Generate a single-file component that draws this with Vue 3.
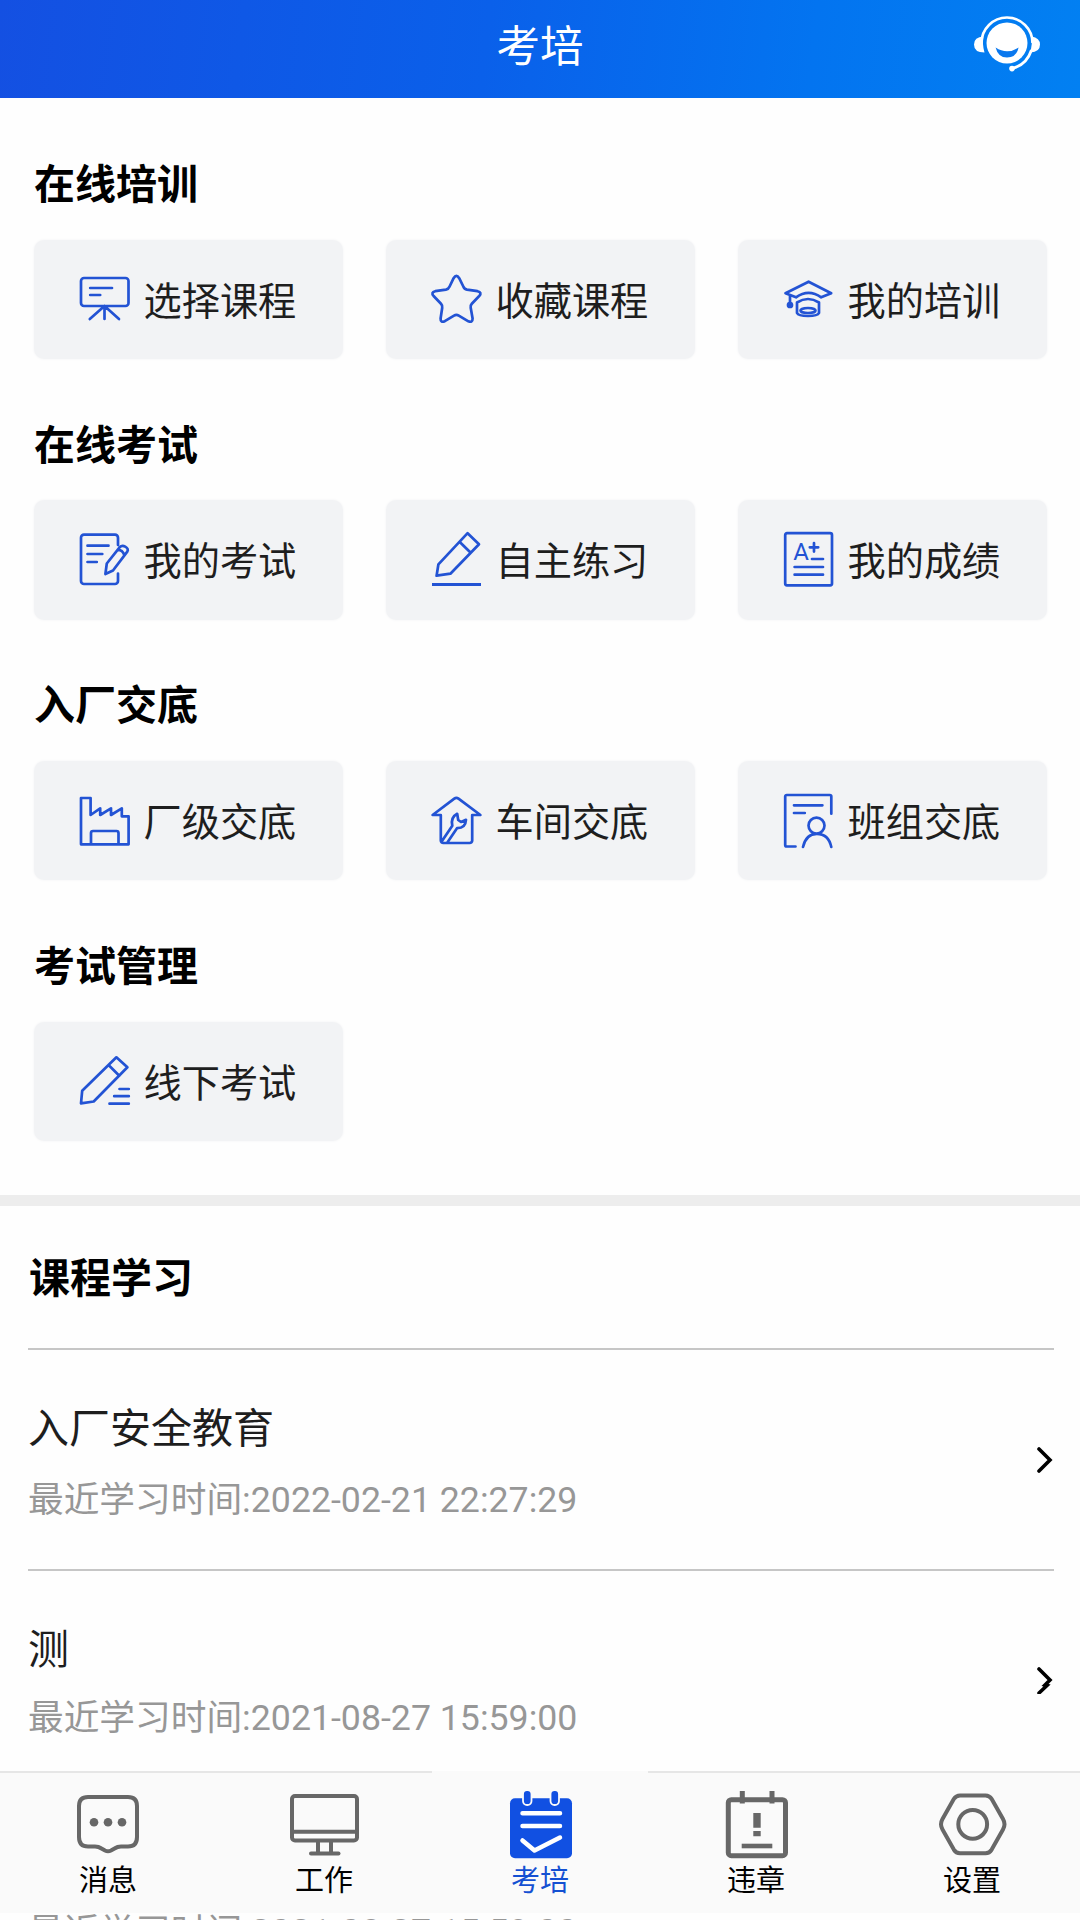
<script setup>
const sections = [
  {
    title: '在线培训',
    items: [
      { label: '选择课程', icon: 'board' },
      { label: '收藏课程', icon: 'star' },
      { label: '我的培训', icon: 'cap' },
    ],
  },
  {
    title: '在线考试',
    items: [
      { label: '我的考试', icon: 'exam' },
      { label: '自主练习', icon: 'edit' },
      { label: '我的成绩', icon: 'score' },
    ],
  },
  {
    title: '入厂交底',
    items: [
      { label: '厂级交底', icon: 'factory' },
      { label: '车间交底', icon: 'workshop' },
      { label: '班组交底', icon: 'team' },
    ],
  },
  {
    title: '考试管理',
    items: [{ label: '线下考试', icon: 'offline' }],
  },
]

const iconPaths = {
  board: 'M4 9H45.5a3 3 0 0 1 3 3V34a3 3 0 0 1-3 3H4a3 3 0 0 1-3-3V12a3 3 0 0 1 3-3ZM10.2 19H32M10.2 26H20.2M24.5 37V50M24.5 37L9.8 50M24.5 37L39 50',
  star: 'M21.6 9.2Q24.4 4.6 27.2 9.2L31.3 17.5Q32.3 20.2 35 20.7L45.5 22.2Q50.4 23.4 47.2 27L39.8 34.8Q38.2 36.5 38.7 38.8L40.6 49.5Q40.6 54 36.4 52.3L26.8 46.6Q24.4 45.2 22 46.6L12.8 52.2Q8.4 54 8.6 49.5L10.2 38.8Q10.6 36.5 9 34.8L1.6 27Q-1.4 23.4 3.2 22.2L13.9 20.7Q16.5 20.2 17.6 17.5Z',
  cap: 'M1.5 24.2L24.6 12.7L47.2 24.2L37.2 28.3Q24.6 19.5 12 28.3ZM13 44V33.5Q24 26.5 35 33.5V44Q33.5 47 24 47Q14.5 47 13 44ZM6 26.5V34',
  exam: 'M38 15V7.7a3 3 0 0 0-3-3H4a3 3 0 0 0-3 3V51a3 3 0 0 0 3 3H35a3 3 0 0 0 3-3V43.5M7.5 15.7H28.5M7.5 24H22.3M7.5 32H16.8M25.4 44L26.8 33.5L39.6 17.3Q42 14.8 45.2 16.6Q49 18.8 47.3 21.6L33 40.5ZM38.2 19.8Q42.5 20 44.2 24.8',
  edit: 'M4.6 45.7L6.4 34.3L35.6 3.2L47 14.3L18.4 43.7ZM28 12.3L38.2 22.3',
  score: 'M3 3.2H46.2a1.8 1.8 0 0 1 1.8 1.8V53.5a1.8 1.8 0 0 1-1.8 1.8H3a1.8 1.8 0 0 1-1.8-1.8V5a1.8 1.8 0 0 1 1.8-1.8ZM25.8 17.3H34.2M30 13V21.6M28 29H39M10.6 37H39M10.6 44.7H39',
  factory: 'M1 53.3V7H10.6V24L20.2 17.3V24L31 17.3V24L41.8 17.3V25.3H48.6V53.3ZM11 53.3V42a2 2 0 0 1 2-2H36.5a2 2 0 0 1 2 2V53.3',
  workshop: 'M22.3 7.6Q24.4 6 26.5 7.6L48.4 24H40.2V49.5a2.5 2.5 0 0 1-2.5 2.5H11.3a2.5 2.5 0 0 1-2.5-2.5V24H.6ZM10 50L20.3 34.8Q18.4 26.5 25.2 22.8L26.2 29L29 31L34 28.8Q33.6 37.3 25 37.2L15.5 51.2',
  team: 'M47.3 22.7V5.5a1.5 1.5 0 0 0-1.5-1.5H2.7a1.5 1.5 0 0 0-1.5 1.5V54a1.5 1.5 0 0 0 1.5 1.5H11.5M10 14.3H38.4M10 22H20.8M24.5 34.6a8 8 0 1 0 16 0a8 8 0 1 0-16 0M19 56Q22 42.8 32.8 42.8Q44.5 42.8 47.3 56',
  offline: 'M1 52.3L2.2 39.7L36.4 6.3L47.4 16.3L13.7 50.5ZM28.8 14.3L39.3 24.7M39.5 38H48.8M34.2 45.2H48.8M29.5 52.7H48.8',
}

const records = [
  { title: '入厂安全教育', time: '2022-02-21 22:27:29', arrow: 'M2 2L13 13L2 24' },
  { title: '测', time: '2021-08-27 15:59:00', arrow: 'M2 2L13 13L8 18L10 18.5L2 26' },
  { title: '测', time: '2021-08-27 15:59:00' },
]

const tabs = [
  { label: '消息', icon: 'message' },
  { label: '工作', icon: 'work' },
  { label: '考培', icon: 'training', active: true },
  { label: '违章', icon: 'violation' },
  { label: '设置', icon: 'settings' },
]
</script>

<template>
  <div class="page">
    <header class="header">
      <h1 class="header-title">考培</h1>
      <svg class="service" viewBox="0 0 74 66" width="74" height="66">
        <path d="M11.5 33A25.5 25.5 0 0 1 62.5 33" fill="none" stroke="#fff" stroke-width="2.6" />
        <path d="M13.5 26.5Q4 27 4 34.5Q4 42.5 14.5 42.5Q12 34 13.5 26.5Z" fill="#fff" />
        <path d="M61.5 26.5Q70 28 70 34.5Q70 42 60.5 42.5Q62.5 34 61.5 26.5Z" fill="#fff" />
        <path d="M61.5 40Q56.5 55 42 58.6" fill="none" stroke="#fff" stroke-width="2.8" />
        <circle cx="42" cy="58.6" r="2.8" fill="#fff" />
        <circle cx="37" cy="33" r="20.5" fill="#fff" />
        <path d="M25.6 37.5Q37 45 48.6 37.5Q46.500 47.5 37 47.5Q28 47.5 25.6 37.5Z" fill="#0a78ee" />
      </svg>
    </header>

    <main class="menu">
      <section v-for="section in sections" :key="section.title" class="section">
        <h2 class="section-title">{{ section.title }}</h2>
        <div class="grid">
          <div v-for="item in section.items" :key="item.label" class="card">
            <svg class="card-icon" viewBox="0 0 50 60" width="50" height="60">
              <path :d="iconPaths[item.icon]" />
              <template v-if="item.icon === 'cap'">
                <ellipse cx="24" cy="41.5" rx="7.5" ry="2.5" />
                <circle class="solid" cx="6" cy="36" r="2" />
              </template>
              <path v-if="item.icon === 'edit'" class="underline" d="M0 54.5H49" />
              <text v-if="item.icon === 'score'" class="grade" x="9.3" y="30">A</text>
            </svg>
            <span class="card-label">{{ item.label }}</span>
          </div>
        </div>
      </section>
    </main>

    <section class="records">
      <h2 class="section-title records-title">课程学习</h2>
      <article v-for="(record, i) in records" :key="i" class="record">
        <div class="record-body">
          <div class="record-title">{{ record.title }}</div>
          <div class="record-time">最近学习时间:{{ record.time }}</div>
        </div>
        <svg v-if="record.arrow" class="arrow" viewBox="0 0 16 27" width="16" height="27"><path :d="record.arrow" /></svg>
      </article>
    </section>

    <nav class="tabbar">
      <div v-for="tab in tabs" :key="tab.label" class="tab" :class="{ active: tab.active }">
        <svg class="tab-icon" viewBox="0 0 72 72" width="72" height="72">
          <template v-if="tab.icon === 'message'">
            <path d="M16 9H56Q65 9 65 18V49Q65 58.5 56 58.5H49Q45.5 58.5 42.5 60.5L39 62.5Q36 64 33 62.5L29.5 60.5Q26.5 58.5 23 58.5H16Q7 58.5 7 49V18Q7 9 16 9Z" />
            <circle class="fill" cx="22" cy="34.3" r="4.3" />
            <circle class="fill" cx="36" cy="34.3" r="4.3" />
            <circle class="fill" cx="50" cy="34.3" r="4.3" />
          </template>
          <template v-else-if="tab.icon === 'work'">
            <rect x="4" y="8" width="65" height="44.5" rx="3" />
            <path d="M4 43.7H69M30 53V65M43 53V65" />
            <path d="M23 65.5H50.5" stroke-linecap="round" />
          </template>
          <template v-else-if="tab.icon === 'training'">
            <rect class="blue" x="6" y="10.3" width="62" height="60" rx="5" />
            <rect class="pin" x="19" y="2" width="8.5" height="15" rx="4" />
            <rect class="pin" x="46.5" y="2" width="8.5" height="15" rx="4" />
            <path class="white" d="M18.5 25.3H56M18.5 38H56M18.5 52.5L30.5 62.5L56 49.5" />
          </template>
          <template v-else-if="tab.icon === 'violation'">
            <rect x="8.3" y="11.7" width="57.2" height="56" rx="3" stroke-width="5" />
            <path d="M22.3 3V15.5M52 3V15.5" stroke-width="5" />
            <path d="M37 25V39.7M37 43V48.3" stroke-width="7.4" />
            <path d="M21.7 58H52.3" stroke-width="4.6" />
          </template>
          <template v-else>
            <path d="M24 7.4H49.5Q53.5 7.4 55.7 11L67 31Q70 36.3 67 41.6L55.7 61.6Q53.5 65.2 49.5 65.2H24Q20 65.2 17.8 61.6L6.5 41.6Q3.5 36.3 6.5 31L17.8 11Q20 7.4 24 7.4Z" />
            <circle cx="36.7" cy="36.3" r="14.4" />
          </template>
        </svg>
        <span class="tab-label">{{ tab.label }}</span>
      </div>
    </nav>
  </div>
</template>

<style>
body {
  margin: 0;
  background: #fefefe;
}
</style>

<style scoped>
.page {
  position: relative;
  width: 1080px;
  height: 1920px;
  overflow: hidden;
  background: #fefefe;
  font-family: Roboto, "Noto Sans CJK SC", sans-serif;
  color: #1e1e1e;
}
.header {
  display: flex;
  align-items: center;
  justify-content: flex-end;
  position: relative;
  height: 98px;
  box-sizing: border-box;
  padding: 0 36px 12px 0;
  background: linear-gradient(97deg, #1450e2 0%, #0a60ea 45%, #0374f0 75%, #0280f2 100%);
}
.header-title {
  position: absolute;
  inset: 0;
  margin: 0;
  text-align: center;
  font-size: 43.5px;
  font-weight: 400;
  line-height: 95px;
  color: #fff;
}
.menu {
  display: flex;
  flex-direction: column;
  gap: 55.7px;
  height: 1041px;
  padding: 56px 33px 0 34px;
}
.section-title {
  margin: 0;
  font-size: 41px;
  font-weight: 700;
  line-height: 63px;
  color: #000;
}
.grid {
  display: grid;
  grid-template-columns: repeat(3, 309px);
  gap: 43px;
  margin-top: 22.5px;
}
.card {
  display: flex;
  align-items: center;
  gap: 14px;
  height: 119.5px;
  box-sizing: border-box;
  padding-left: 45.5px;
  border-radius: 10px;
  background: #f2f3f5;
  box-shadow: 0 0 3px #f2f3f5;
}
.card-icon {
  flex: none;
  overflow: visible;
  fill: none;
  stroke: #2353d4;
  stroke-width: 2.7;
  stroke-linejoin: round;
  stroke-linecap: round;
}
.card-icon .solid {
  fill: #2353d4;
}
.card-icon .underline {
  stroke-width: 3.2;
  stroke-linecap: butt;
}
.card-icon .grade {
  font-family: Roboto, sans-serif;
  font-size: 24px;
  fill: #2353d4;
  stroke: none;
}
.card-label {
  padding-top: 5px;
  font-size: 38.2px;
  line-height: 56px;
  white-space: nowrap;
}
.records {
  border-top: 11px solid #ededed;
  padding: 0 26px 0 28px;
}
.records-title {
  padding: 42px 0 37px 1px;
}
.record {
  display: flex;
  align-items: center;
  justify-content: space-between;
  height: 220.5px;
  box-sizing: border-box;
  border-top: 2px solid #c6c6c6;
}
.record-title {
  padding-top: 7px;
  font-size: 41px;
  line-height: 60px;
}
.record-time {
  margin-top: 14px;
  font-size: 35.7px;
  line-height: 54px;
  color: #979797;
}
.record:nth-of-type(2) .record-title {
  padding-top: 6px;
}
.record:nth-of-type(2) .record-time {
  margin-top: 11px;
}
.record:nth-of-type(3) .record-title {
  padding-top: 0;
}
.record:nth-of-type(3) .record-time {
  margin-top: 4px;
}
.arrow {
  margin-right: 1px;
  padding-top: 2px;
  fill: none;
  stroke: #000;
  stroke-width: 3.6;
  stroke-linecap: round;
}
.tabbar {
  position: absolute;
  left: 0;
  right: 0;
  bottom: 7px;
  display: flex;
  height: 142px;
  background: #fafafa;
}
.tab {
  flex: 1;
  display: flex;
  flex-direction: column;
  align-items: center;
  box-sizing: border-box;
  border-top: 2px solid #e6e6e6;
  padding-top: 15px;
  color: #000;
}
.tab.active {
  border-top-color: #fafafa;
  color: #1450d2;
}
.tab-icon {
  fill: none;
  stroke: #676767;
  stroke-width: 4;
}
.tab-icon .fill {
  fill: #676767;
  stroke: none;
}
.tab-icon .blue {
  fill: #1150e2;
  stroke: none;
}
.tab-icon .pin {
  fill: #1150e2;
  stroke: #fafafa;
  stroke-width: 1.8;
}
.tab-icon .white {
  stroke: #fff;
  stroke-width: 4.5;
  stroke-linecap: round;
  stroke-linejoin: round;
}
.tab-label {
  font-size: 29px;
  line-height: 42px;
}
</style>
